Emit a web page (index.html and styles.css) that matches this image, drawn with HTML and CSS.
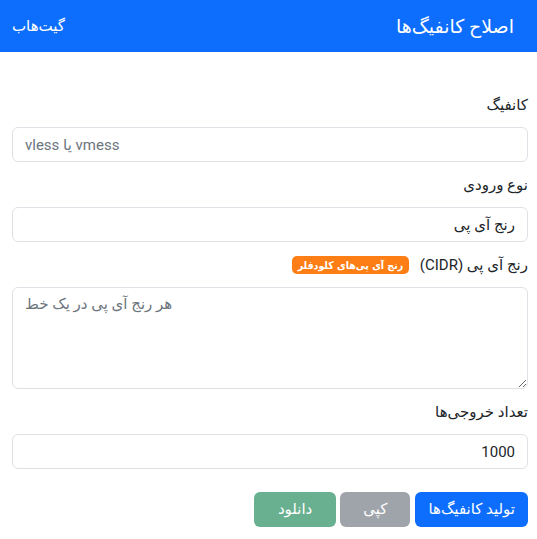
FILE: index.html
```html
<!DOCTYPE html>
<html lang="fa" dir="rtl">
<head>
    <meta charset="UTF-8">
    <meta name="viewport" content="width=device-width, initial-scale=1.0">
    <title>اصلاح کانفیگ‌ها</title>
    <link rel="stylesheet" href="styles.css">
</head>
<body>

    <nav class="navbar">
        <span class="brand">اصلاح کانفیگ‌ها</span>
        <a class="nav-link" href="#">گیت‌هاب</a>
    </nav>

    <main class="page">
        <div class="field">
            <label for="config">کانفیگ</label>
            <input type="text" id="config" class="control" dir="ltr" placeholder="vless یا vmess">
        </div>

        <div class="field">
            <label for="inputType">نوع ورودی</label>
            <input type="text" id="inputType" class="control" value="رنج آی پی">
        </div>

        <div class="field">
            <label for="ranges">رنج آی پی (CIDR) <span class="badge">رنج آی پی‌های کلودفلر</span></label>
            <textarea id="ranges" class="control area" dir="ltr" placeholder="هر رنج آی پی در یک خط"></textarea>
        </div>

        <div class="field">
            <label for="count">تعداد خروجی‌ها</label>
            <input type="text" id="count" class="control" value="1000">
        </div>

        <div class="actions">
            <button class="btn btn-primary">تولید کانفیگ‌ها</button>
            <button class="btn btn-secondary" disabled>کپی</button>
            <button class="btn btn-success" disabled>دانلود</button>
        </div>
    </main>

</body>
</html>
```

FILE: styles.css
```css
:root {
    --blue: #0d6efd; --white: #ffffff; --text-dark: #212529;
    --border: #dee2e6; --placeholder: #6c757d; --orange: #fd7e14;
    --gray: #6c757d; --green: #198754;
}
body {
    font-family: Roboto, "DejaVu Sans", sans-serif; margin: 0;
    font-size: 15px; line-height: 21px; color: var(--text-dark); background: var(--white);
}
.navbar {
    background-color: var(--blue); height: 52px; padding: 0 23px 0 12px;
    display: flex; align-items: center; justify-content: space-between;
}
.brand { color: var(--white); font-size: 19px; }
.nav-link { color: var(--white); text-decoration: none; font-size: 15px; font-weight: 500; }

.page { padding: 43px 9px 0 12px; }
.field { margin-bottom: 13px; }
.field label { display: block; margin-bottom: 11px; }
.badge {
    display: inline-block; background-color: var(--orange); color: var(--white);
    font-family: "DejaVu Sans Condensed", "DejaVu Sans", sans-serif;
    font-size: 10.5px; font-weight: 700; line-height: 1; padding: 4px 6px 3px;
    border-radius: 5px; vertical-align: 1px; margin-right: 7px;
}
.control {
    display: block; width: 100%; box-sizing: border-box; font: inherit;
    color: var(--text-dark); background: var(--white);
    border: 1px solid var(--border); border-radius: 6px;
    padding: 6px 12px; height: 35px;
}
.control::placeholder { color: var(--placeholder); }
.control.area { height: 102px; resize: vertical; }

.actions { display: flex; gap: 4px; margin-top: 23px; }
.btn {
    font: inherit; color: var(--white); border: none; border-radius: 6px;
    padding: 6px 13px; height: 35px; font-weight: 500; cursor: pointer;
}
.btn-primary { background-color: var(--blue); margin-left: 1px; }
.btn-secondary { background-color: var(--gray); opacity: 0.65; padding: 6px 23px; }
.btn-success { background-color: var(--green); opacity: 0.65; padding: 6px 24px; }
```
